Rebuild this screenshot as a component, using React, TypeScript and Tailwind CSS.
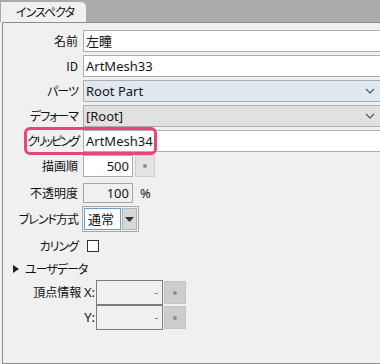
import React from "react";

const LBL =
  "w-[80px] shrink-0 pr-[5px] text-right font-['Noto_Sans_CJK_JP',sans-serif] text-[12px] leading-none text-[#111] [font-feature-settings:'palt']";
const KANA = "tracking-[-1px]";
const VAL =
  "font-['Noto_Sans','Noto_Sans_CJK_JP',sans-serif] text-[13px] leading-none text-[#151515]";

function Chevron() {
  return (
    <svg width="10" height="6" viewBox="0 0 10 6" className="mr-[5px]">
      <polyline points="1,1 5,5 9,1" fill="none" stroke="#555" strokeWidth="1.2" />
    </svg>
  );
}

function DotButton({ w, h, bg, border }: { w: string; h: string; bg: string; border: string }) {
  return (
    <div className={`${w} ${h} ${bg} ${border} border flex items-center justify-center shrink-0`}>
      <div className="w-[4px] h-[4px] rounded-full bg-[#8e8e8e]" />
    </div>
  );
}

export default function App() {
  return (
    <div className="w-[380px] h-[364px] bg-[#f0f0f0] overflow-hidden">
      <div className="h-[22px] bg-[#ababab] pt-[2px] pl-[1px]">
        <div className="w-[85px] h-[20px] bg-[#f0f0f0] rounded-tr-[5px] flex items-center pl-[15px] font-['Noto_Sans_CJK_JP',sans-serif] text-[12px] tracking-[-1px] text-[#111] [font-feature-settings:'palt']">
          インスペクタ
        </div>
      </div>
      <div className="h-[342px] ml-[2px] border-l border-t border-b border-[#8c8c8c] pt-[7px] flex flex-col">
        {/* 名前 */}
        <div className="flex items-center h-[22px]">
          <div className={LBL}>名前</div>
          <div className={`flex-1 h-[22px] bg-white border-y border-l border-[#adadad] flex items-center pl-[2px] ${VAL}`}>左瞳</div>
        </div>
        {/* ID */}
        <div className="flex items-center h-[22px] mt-[3px]">
          <div className={LBL}>ID</div>
          <div className={`flex-1 h-[22px] bg-white border-y border-l border-[#adadad] flex items-center pl-[2px] ${VAL}`}>ArtMesh33</div>
        </div>
        {/* パーツ */}
        <div className="flex items-center h-[22px] mt-[3px]">
          <div className={`${LBL} ${KANA}`}>パーツ</div>
          <div className={`flex-1 h-[22px] bg-[#e0e8f0] border-y border-l border-[#adadad] flex items-center justify-between pl-[2px] ${VAL}`}>
            <span>Root Part</span>
            <Chevron />
          </div>
        </div>
        {/* デフォーマ */}
        <div className="flex items-center h-[22px] mt-[3px]">
          <div className={`${LBL} ${KANA}`}>デフォーマ</div>
          <div className={`flex-1 h-[22px] bg-[#e1e1e1] border-y border-l border-[#adadad] flex items-center justify-between pl-[2px] ${VAL}`}>
            <span>[Root]</span>
            <Chevron />
          </div>
        </div>
        {/* クリッピング */}
        <div className="relative flex items-center h-[22px] mt-[3px]">
          <div className={`${LBL} tracking-[-2px]`}>クリッピング</div>
          <div className={`flex-1 h-[22px] bg-white border-y border-l border-[#adadad] flex items-center pl-[2px] ${VAL}`}>ArtMesh34</div>
          <div className="absolute left-[21px] top-[-3px] w-[133px] h-[28px] border-[3px] border-[#e8457c] rounded-[6px]" />
        </div>
        {/* 描画順 */}
        <div className="flex items-center h-[22px] mt-[3px]">
          <div className={LBL}>描画順</div>
          <div className={`w-[50px] h-[22px] bg-white border border-[#adadad] flex items-center justify-end pr-[3px] ${VAL}`}>500</div>
          <div className="ml-[2px]">
            <DotButton w="w-[20px]" h="h-[22px]" bg="bg-[#e3e3e3]" border="border-[#cfcfcf]" />
          </div>
        </div>
        {/* 不透明度 */}
        <div className="flex items-center h-[20px] mt-[6px]">
          <div className={LBL}>不透明度</div>
          <div className={`w-[50px] h-[20px] bg-[#f0f0f0] border border-[#a5a5a5] flex items-center justify-end pr-[3px] ${VAL}`}>100</div>
          <div className={`ml-[7px] ${VAL}`}>%</div>
        </div>
        {/* ブレンド方式 */}
        <div className="flex items-center h-[26px] mt-[3px]">
          <div className={`${LBL} ${KANA}`}>ブレンド方式</div>
          <div className="ml-[-1px] w-[57px] h-[26px] border border-[#a8a8a8] bg-[#f0f0f0] flex items-center p-[1px] gap-[1px]">
            <div className="w-[38px] h-[22px] bg-white border border-[#6f9cc9] flex items-center pl-[3px] font-['Noto_Sans_CJK_JP',sans-serif] text-[13px] text-[#111]">
              通常
            </div>
            <div className="w-[15px] h-[22px] bg-[#d7d7d7] border border-[#b4b4b4] flex items-center justify-center">
              <svg width="9" height="5" viewBox="0 0 9 5">
                <polygon points="0,0 9,0 4.5,5" fill="#333" />
              </svg>
            </div>
          </div>
        </div>
        {/* カリング */}
        <div className="flex items-center h-[20px] mt-[4px]">
          <div className={`${LBL} ${KANA}`}>カリング</div>
          <div className="ml-[4px] w-[12px] h-[12px] bg-white border border-[#333]" />
        </div>
        {/* ユーザデータ */}
        <div className="flex items-center h-[22px] mt-[2px] pl-[10px]">
          <svg width="6" height="8" viewBox="0 0 6 8">
            <polygon points="0,0 6,4 0,8" fill="#222" />
          </svg>
          <span className="ml-[6px] font-['Noto_Sans_CJK_JP',sans-serif] text-[12px] leading-none tracking-[-1px] text-[#111] [font-feature-settings:'palt']">
            ユーザデータ
          </span>
        </div>
        {/* 頂点情報 */}
        <div className="flex items-center h-[25px]">
          <div className="w-[93px] shrink-0 pr-[1px] text-right font-['Noto_Sans_CJK_JP',sans-serif] text-[12px] leading-none text-[#111] [font-feature-settings:'palt']">
            頂点情報 <span className="font-['Noto_Sans',sans-serif] text-[13px]">X:</span>
          </div>
          <div className="w-[67px] h-[25px] bg-[#f0f0f0] border border-[#7d7d7d] flex items-center justify-end pr-[4px] font-['Noto_Sans',sans-serif] text-[11px] text-[#666]">
            -
          </div>
          <div className="ml-[1px]">
            <DotButton w="w-[22px]" h="h-[23px]" bg="bg-[#cdcdcd]" border="border-[#c3c3c3]" />
          </div>
        </div>
        <div className="flex items-center h-[25px]">
          <div className="w-[93px] shrink-0 pr-[1px] text-right font-['Noto_Sans',sans-serif] text-[13px] leading-none text-[#111]">
            Y:
          </div>
          <div className="w-[67px] h-[25px] bg-[#f0f0f0] border border-[#7d7d7d] flex items-center justify-end pr-[4px] font-['Noto_Sans',sans-serif] text-[11px] text-[#666]">
            -
          </div>
          <div className="ml-[1px]">
            <DotButton w="w-[22px]" h="h-[23px]" bg="bg-[#cdcdcd]" border="border-[#c3c3c3]" />
          </div>
        </div>
      </div>
    </div>
  );
}
